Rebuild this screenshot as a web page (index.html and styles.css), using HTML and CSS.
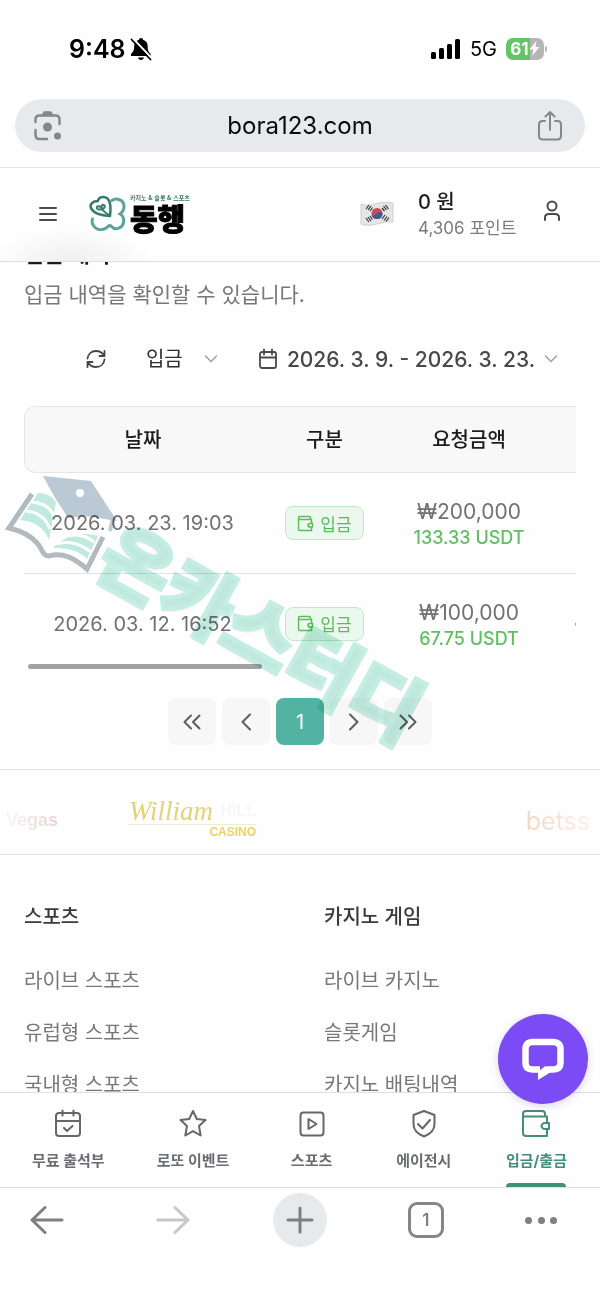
FILE: index.html
```
<!DOCTYPE html>
<html lang="ko">
<head>
  <meta charset="UTF-8" />
  <meta name="viewport" content="width=device-width, initial-scale=1.0" />
  <title>동행 - 입금 내역</title>
  <link rel="stylesheet" href="styles.css">
</head>
<body>
  <div class="status-bar">
    <div class="status-left">
      <span class="clock">9:48</span>
      <svg width="22" height="24" viewBox="0 0 22 24"><path d="M11 1c1.200 0 2 .8 2 1.800 3 .9 4.600 3.200 4.600 6.200 0 4.500 1 6 3 8v2H1v-2c2-2 3.200-3.500 3.200-8 0-3 1.800-5.300 4.800-6.200C9 1.800 9.800 1 11 1zM8 20.500h6c-.3 1.500-1.500 2.500-3 2.500s-2.700-1-3-2.500z" fill="#000"/><path d="M2.500 1l19 20" stroke="#fff" stroke-width="2"/><path d="M1.500 2.500l19 20" stroke="#000" stroke-width="1.800" stroke-linecap="round"/></svg>
    </div>
    <div class="status-right">
      <svg width="30" height="20" viewBox="0 0 30 20"><rect x="0" y="13" width="5" height="7" rx="1.500"/><rect x="8" y="9" width="5" height="11" rx="1.500"/><rect x="16" y="5" width="5" height="15" rx="1.500"/><rect x="24" y="0" width="5" height="20" rx="1.500"/></svg>
      <span class="network">5G</span>
      <span class="battery"><span>61</span><svg width="11" height="15" viewBox="0 0 11 15"><path d="M7.500 0L.5 8.500h4L3 15l7.500-9h-4.200z" fill="#fff"/></svg></span>
    </div>
  </div>

  <div class="address-bar">
    <button class="icon-btn" aria-label="렌즈">
      <svg width="30" height="32" viewBox="0 0 30 32" fill="none" stroke="#85888b" stroke-width="2.500" stroke-linecap="round"><path d="M2.500 12V9.500c0-2.500 1.500-4 4-4h16c2.500 0 4 1.500 4 4V14M2.500 20v5c0 2.500 1.500 4 4 4H14"/><path d="M10 5l1.500-2.500h6L19 5z" fill="#85888b"/><circle cx="14.500" cy="17" r="4.500" fill="#85888b" stroke="none"/><circle cx="24.500" cy="26" r="3.500" fill="#85888b" stroke="none"/></svg>
    </button>
    <span class="url">bora123.com</span>
    <button class="icon-btn" aria-label="공유">
      <svg width="26" height="32" viewBox="0 0 26 32" fill="none" stroke="#85888b" stroke-width="2" stroke-linecap="round" stroke-linejoin="round"><path d="M8 11H5.500C3 11 2 12.500 2 14.500v11C2 28 3 29.500 5.500 29.500h15c2.500 0 3.500-1.500 3.500-4v-11c0-2-1-3.500-3.500-3.500H18M13 20V2.500M8.500 6.500L13 2l4.500 4.500"/></svg>
    </button>
  </div>

  <header>
    <button class="icon-btn" aria-label="메뉴">
      <svg width="20" height="16" viewBox="0 0 20 16" stroke="#4b4b4d" stroke-width="2" stroke-linecap="round"><path d="M2 2h16M2 8h16M2 14h16"/></svg>
    </button>
    <a class="logo" href="#">
      <svg width="38" height="38" viewBox="0 0 38 38" fill="none" stroke-width="3" stroke-linecap="round">
        <path d="M24 5.500c4-3 12-1 12 6 0 4-2 6-4 7.500 4 2 5 8 2 12-3 3.500-8 3.500-10.500.5-1-1-2.500-1-3.500 0-3.500 4-10 4-13 1C4 29.500 3.500 27 4.500 24" stroke="#5ba49c"/>
        <path d="M22 21c1-9 1-19-7-19-4 0-5 3-5 4-6 0-9 4-6.500 8 3 5 10 6.500 18.500 7z" stroke="#357b68" stroke-width="2.500" stroke-linejoin="round"/>
        <path d="M21 20c-5-3-8-6-7.500-9 .5-2.500 4-1 3 1.500-1 2-6 3-7.500 1-1-2 2-3.500 4-1" stroke="#357b68" stroke-width="2"/>
      </svg>
      <span class="logo-text"><small>카지노 &amp; 슬롯 &amp; 스포츠</small><b>동행</b></span>
    </a>
    <svg class="flag" width="34" height="26" viewBox="0 0 34 26">
      <path d="M1 3c6 2 10 1 16-.5S28 1 33 2v19c-6-1-10 .5-16 2S6 25 1 23z" fill="#e5e5e7" stroke="#c6c6c9" stroke-width=".8"/>
      <circle cx="17" cy="12.500" r="5.500" fill="#c94c56"/><path d="M11.600 14c2 1.500 3.500 0 5-1.500s4-2.500 5.800-.5c.5 4-2.400 6-5.400 6s-5-2-5.400-4z" fill="#41598e"/>
      <g stroke="#333" stroke-width="1.200"><path d="M6 8l3-4M8 9l3-4M10 10l2.500-3.500M23.500 5l3 4M25.500 4l3 4M22 7l2.500 3M6 17l3 4M8 16l3 4M10 15l2.500 3.500M22 18l3-4M24 19.500l3-4M26 20.500l3-4"/></g>
    </svg>
    <div class="balance">
      <strong>0 원</strong>
      <span>4,306 포인트</span>
    </div>
    <button class="icon-btn user" aria-label="내 정보">
      <svg width="18" height="22" viewBox="0 0 18 22" fill="none" stroke="#4b4b4d" stroke-width="2" stroke-linecap="round" stroke-linejoin="round"><circle cx="9" cy="6" r="4.500"/><path d="M2 20v-2.500C2 15 3.500 14 6 14h6c2.500 0 4 1 4 3.500V20"/></svg>
    </button>
  </header>

  <main>
    <section class="history">
      <h1>입금 내역</h1>
      <p class="desc">입금 내역을 확인할 수 있습니다.</p>

      <div class="filters">
        <button class="icon-btn" aria-label="새로고침">
          <svg width="20" height="22" viewBox="0 0 20 22" fill="none" stroke="#454547" stroke-width="1.800" stroke-linecap="round" stroke-linejoin="round"><path d="M18.500 3v5H13.500M1.500 19v-5H6.500M1.500 10.500c.5-4.500 4-7.500 8.500-7.500 4 0 6.500 2 8 4.500M18.500 11.500C18 16 14.500 19 10 19c-4 0-6.500-2-8-4.500"/></svg>
        </button>
        <label class="type-select">
          <select aria-label="구분"><option>입금</option><option>출금</option></select>
          <svg width="14" height="8" viewBox="0 0 14 8" fill="none" stroke="#a0a0a3" stroke-width="1.500" stroke-linecap="round"><path d="M1.500 1L7 6.500 12.500 1"/></svg>
        </label>
        <button class="date-btn">
          <svg width="20" height="22" viewBox="0 0 20 22" fill="none" stroke="#4b4b4d" stroke-width="1.800" stroke-linecap="round" stroke-linejoin="round"><rect x="2" y="4" width="16" height="16" rx="2"/><path d="M2 9.500h16M6 1.500v5M14 1.500v5"/></svg>
          <span>2026. 3. 9. - 2026. 3. 23.</span>
          <svg width="14" height="8" viewBox="0 0 14 8" fill="none" stroke="#a0a0a3" stroke-width="1.500" stroke-linecap="round"><path d="M1.500 1L7 6.500 12.500 1"/></svg>
        </button>
      </div>

      <div class="table-wrap">
        <table>
          <thead>
            <tr><th class="col-date">날짜</th><th class="col-type">구분</th><th class="col-amount">요청금액</th><th class="col-state"></th></tr>
          </thead>
          <tbody>
            <tr>
              <td>2026. 03. 23. 19:03</td>
              <td><span class="badge"><svg width="17" height="17" viewBox="0 0 16 17"><use href="#wallet"/></svg>입금</span></td>
              <td class="amount">₩200,000<span>133.33 USDT</span></td>
              <td></td>
            </tr>
            <tr>
              <td>2026. 03. 12. 16:52</td>
              <td><span class="badge"><svg width="17" height="17" viewBox="0 0 16 17"><use href="#wallet"/></svg>입금</span></td>
              <td class="amount">₩100,000<span>67.75 USDT</span></td>
              <td class="state"><i></i></td>
            </tr>
          </tbody>
        </table>
        <div class="scroll-thumb"></div>
      </div>

      <nav class="pagination">
        <button aria-label="처음"><svg width="20" height="16" viewBox="0 0 20 16"><path d="M9 1.500L2.500 8 9 14.500M17.500 1.500L11 8l6.500 6.500"/></svg></button>
        <button aria-label="이전"><svg width="12" height="18" viewBox="0 0 12 18"><path d="M10 1.500L2.500 9l7.500 7.500"/></svg></button>
        <button class="current">1</button>
        <button aria-label="다음"><svg width="12" height="18" viewBox="0 0 12 18"><path d="M2 1.500L9.500 9 2 16.500"/></svg></button>
        <button aria-label="마지막"><svg width="20" height="16" viewBox="0 0 20 16"><path d="M2.500 1.500L9 8l-6.500 6.500M11 1.500L17.500 8 11 14.500"/></svg></button>
      </nav>
    </section>

    <section class="partners">
      <span class="vegas">Vegas</span>
      <div class="william">
        <p><i>William</i> <b>HILL</b></p>
        <span>CASINO</span>
      </div>
      <span class="betsson">betss</span>
    </section>

    <footer>
      <div>
        <h2>스포츠</h2>
        <a href="#">라이브 스포츠</a>
        <a href="#">유럽형 스포츠</a>
        <a href="#">국내형 스포츠</a>
      </div>
      <div>
        <h2>카지노 게임</h2>
        <a href="#">라이브 카지노</a>
        <a href="#">슬롯게임</a>
        <a href="#">카지노 배팅내역</a>
      </div>
    </footer>

    <div class="watermark">
      <svg width="120" height="110" viewBox="0 0 120 110">
        <path d="M32 23L9 57c13 3 22 8 28 15 6 6 5 13 12 13 14-4 25 2 38 13l16-32" fill="none" stroke="#b3bac0" stroke-width="5"/>
        <path d="M38 22c8 0 14 3 18 9l-7 38C45 57 34 50 20 49z" fill="#c2ebdf"/>
        <path d="M53 77c9-9 22-18 45-12L87 88c-9-9-19-11-34-11z" fill="#c2ebdf"/>
        <g fill="none" stroke="#fff" stroke-width="3"><path d="M32 31c10 1 19 5 22 15M26 40c12 1 20 7 24 18M62 67c11-5 22-4 32 4M57 73c11-4 24 0 34 8"/></g>
        <path d="M43 5l48 5 26 40-24-4c-12-2-18 1-25 1L54 25z" fill="#bccad5"/>
        <circle cx="80" cy="22" r="4" fill="#fff"/>
        <path d="M113 48l-3 12" stroke="#bccad5" stroke-width="4"/>
      </svg>
      <span>온카스터디</span>
    </div>
  </main>

  <button class="chat-btn" aria-label="채팅 상담">
    <svg width="44" height="42" viewBox="0 0 44 42" fill="none" stroke="#fff" stroke-width="6.500"><path d="M18 31.500h-6c-5 0-7.500-2-7.500-7V11c0-4.500 2.500-7 7-7h21c4.500 0 7 2.500 7 7v13.500c0 5-2.500 7-7 7h-3.500"/><path d="M17 28.500v13.500l13-8v-5.700h-6l-5 4v-3.800z" fill="#fff" stroke="none"/></svg>
  </button>

  <nav class="tab-bar">
    <a href="#"><svg width="28" height="30" viewBox="0 0 28 30"><rect x="2" y="4" width="24" height="23" rx="3"/><path d="M2 12h24M8.500 1.500v5M19.500 1.500v5M10 19l3 3 5.500-5"/></svg>무료 출석부</a>
    <a href="#"><svg width="28" height="30" viewBox="0 0 28 30"><path d="M14 2l3.800 8 8.700 1-6.500 6 1.700 9.500-7.700-4.300-7.700 4.300L8 17l-6.500-6 8.700-1z"/></svg>로또 이벤트</a>
    <a href="#"><svg width="28" height="30" viewBox="0 0 28 30"><rect x="2.500" y="3.500" width="23" height="23" rx="3"/><path d="M10.500 10v10l8-5z"/></svg>스포츠</a>
    <a href="#"><svg width="28" height="30" viewBox="0 0 28 30"><path d="M14 2l10.500 4v9c0 6-4 10-10.500 12.500C7.500 25 3.500 21 3.500 15V6zM8 15l4.500 4.500L20 11"/></svg>에이전시</a>
    <a href="#" class="active"><svg width="30" height="30" viewBox="0 0 30 30"><path d="M2 7.500h24V14M26 20v7H5c-2 0-3-1-3-3V4.500C2 3 3 2 5 2h16c2 0 3 1 3 2.500v3M28 14h-4c-2 0-3.500 1.500-3.500 3s1.500 3 3.500 3h4z"/></svg>입금/출금</a>
  </nav>

  <div class="browser-bar">
    <button aria-label="뒤로"><svg width="34" height="30" viewBox="0 0 34 30"><path d="M32 15H2M15 2.500L2 15l13 12.500"/></svg></button>
    <button class="off" aria-label="앞으로"><svg width="34" height="30" viewBox="0 0 34 30"><path d="M2 15h30M19 2.500L32 15 19 27.500"/></svg></button>
    <button class="new-tab" aria-label="새 탭"><svg width="28" height="28" viewBox="0 0 28 28"><path d="M14 2v24M2 14h24"/></svg></button>
    <button aria-label="탭 보기"><span class="tab-count">1</span></button>
    <button class="more" aria-label="더보기"><i></i><i></i><i></i></button>
  </div>

  <svg class="defs" width="0" height="0">
    <symbol id="wallet" viewBox="0 0 16 17"><path d="M1 4.500h13v4M14 12v3.500H2.500C1.500 15.500 1 15 1 14V3c0-1 .5-1.500 1.500-1.500h9c1 0 1.500.5 1.500 1.500v1.500M15.200 8.500h-2.700c-1 0-2 .7-2 1.700s1 1.800 2 1.800h2.700z" fill="none" stroke="#5dba5d" stroke-width="1.500" stroke-linejoin="round"/></symbol>
  </svg>
</body>
</html>
```
FILE: styles.css
```
* { box-sizing: border-box; }
body { font-family: Inter, "Noto Sans CJK KR", sans-serif; margin: 0; height: 100vh; display: flex; flex-direction: column; background: #fefefe; color: #1c1c1e; position: relative; overflow: hidden; }
button { font: inherit; color: inherit; background: none; border: none; padding: 0; cursor: pointer; }
a { color: inherit; text-decoration: none; }
svg { display: block; flex: none; }
.icon-btn { display: flex; align-items: center; justify-content: center; }
.defs { position: absolute; }

.status-bar { flex: none; height: 99px; padding: 0 56px 2px 69px; display: flex; align-items: center; justify-content: space-between; color: #000; }
.status-left, .status-right { display: flex; align-items: center; gap: 4px; }
.clock { font-size: 25px; font-weight: 600; }
.status-right { gap: 9px; }
.network { font-size: 20px; }
.battery { position: relative; width: 38px; height: 22px; border-radius: 7px; background: linear-gradient(90deg, #65c466 62%, #b5b5b5 62%); color: #fff; font-size: 17px; font-weight: 700; display: flex; align-items: center; justify-content: center; }
.battery::after { content: ""; position: absolute; right: -3px; top: 8px; width: 2px; height: 6px; border-radius: 0 2px 2px 0; background: #b5b5b5; }

.address-bar { flex: none; height: 53px; margin: 0 15px 15px; padding: 0 22px 0 18px; border-radius: 27px; background: #e8e9ec; display: flex; align-items: center; justify-content: space-between; }
.url { font-size: 24px; color: #0b0b0b; }

header { flex: none; height: 95px; border-top: 1px solid #e5e5e5; border-bottom: 1px solid #dedede; padding: 0 39px 2px 38px; display: flex; align-items: center; background: radial-gradient(ellipse 80px 34px at 72px 100%, #efefef, rgba(254, 254, 254, 0)); }
.logo { display: flex; align-items: center; gap: 4px; margin-left: 30px; }
.logo-text { display: flex; flex-direction: column; color: #000; font-family: "Noto Sans CJK KR", sans-serif; }
.logo-text small { font-size: 6px; line-height: 6px; font-weight: 700; color: #357b68; white-space: nowrap; }
.logo-text b { font-size: 30px; line-height: 32px; font-weight: 900; -webkit-text-stroke: 1px #000; }
.flag { margin-left: auto; margin-right: 24px; }
.balance { display: flex; flex-direction: column; width: 106px; line-height: 26px; padding-top: 3px; }
.balance strong { font-size: 20px; font-weight: 500; }
.balance span { font-size: 17px; color: #7c7c80; white-space: nowrap; }
.user { margin: 0 0 5px 19px; }

main { flex: 1; min-height: 0; overflow: hidden; position: relative; }
.history { padding: 0 24px 24px; }
h1 { font-size: 22px; line-height: 30px; font-weight: 700; margin: -23px 0 11px; }
.desc { font-size: 21px; line-height: 30px; color: #77777a; margin: 0 0 25px; }
.filters { display: flex; align-items: center; justify-content: flex-end; height: 48px; padding-right: 18px; margin-bottom: 23px; }
.type-select { display: flex; align-items: center; margin: 0 40px; gap: 20px; }
.type-select select { appearance: none; border: none; background: none; padding: 0; font: inherit; font-size: 20px; color: #2d2d2f; width: 38px; }
.date-btn { display: flex; align-items: center; gap: 9px; font-size: 21px; font-weight: 500; color: #48484a; white-space: nowrap; }

.table-wrap { position: relative; overflow: hidden; }
table { width: 660px; table-layout: fixed; border-collapse: separate; border-spacing: 0; }
th { height: 67px; padding: 0 0 2px; background: #f8f8f8; border: solid #e5e5e5; border-width: 1px 0; font-size: 20px; font-weight: 500; }
th:first-child { border-left-width: 1px; border-radius: 12px 0 0 12px; }
.col-date { width: 237px; }
.col-type { width: 127px; }
.col-amount { width: 162px; }
td { height: 101px; padding: 0; text-align: center; font-size: 20px; color: #717174; border-bottom: 1px solid #e2e2e2; }
tbody tr:last-child td { border-bottom: none; padding-bottom: 2px; }
.badge { display: inline-flex; align-items: center; gap: 6px; height: 34px; padding: 0 11px; border: 1px solid #bfe9cb; border-radius: 8px; background: #ebf8ee; color: #5dba5d; font-size: 17px; }
td.amount { font-size: 21px; line-height: 26px; padding-top: 4px; }
.amount span { display: block; font-size: 18px; font-weight: 500; color: #5fbf63; }
td.state { padding-left: 25px; }
.state i { display: block; width: 4px; height: 4px; border-radius: 2px; background: #6aa7a0; }
.scroll-thumb { position: absolute; left: 4px; bottom: 6px; width: 234px; height: 5px; border-radius: 3px; background: #a2a2a2; }

.pagination { display: flex; justify-content: center; gap: 6px; margin-top: 23px; }
.pagination button { width: 48px; height: 47px; border-radius: 8px; background: #f7f7f7; display: flex; align-items: center; justify-content: center; font-size: 20px; }
.pagination .current { background: #52b3a2; color: #fff; }
.pagination svg { fill: none; stroke: #5d5d60; stroke-width: 2; stroke-linecap: round; stroke-linejoin: round; }

.partners { height: 86px; border: solid #e2e2e2; border-width: 1px 0; padding: 0 6px; display: flex; align-items: center; font-family: "Liberation Sans", Arial, sans-serif; overflow: hidden; }
.vegas { font-size: 18px; font-weight: 700; margin-top: 16px; background: linear-gradient(90deg, #f8f6f6, #e8d2d5); -webkit-background-clip: text; -webkit-text-fill-color: transparent; }
.william { width: 127px; margin: 12px auto 0 71px; text-align: right; }
.william p { margin: 0; display: flex; align-items: center; justify-content: space-between; line-height: 26px; border-bottom: 1px solid #f0ebcb; }
.william i { font-family: "Liberation Serif", serif; font-size: 27px; color: #e4d277; }
.william b { font-size: 16px; color: #f7f7f7; }
.william span { display: block; font-size: 12px; line-height: 14px; font-weight: 700; color: #ead45f; }
.betsson { font-family: Inter, sans-serif; font-size: 25px; margin-top: 18px; padding-right: 4px; background: linear-gradient(90deg, #f3d6c2, #fbf3ee); -webkit-background-clip: text; -webkit-text-fill-color: transparent; }

footer { display: grid; grid-template-columns: 1fr 1fr; padding: 47px 0 0 24px; gap: 0 24px; }
footer h2 { font-size: 20px; line-height: 30px; font-weight: 500; color: #3a3a3c; margin: 0 0 34px; }
footer a { display: block; font-size: 20px; line-height: 30px; color: #77777a; margin-bottom: 22px; }

/* promo mark laid over the list */
.watermark { position: absolute; left: 0; top: 209px; width: 440px; height: 290px; mix-blend-mode: multiply; pointer-events: none; }
.watermark svg { position: absolute; left: 0; top: 0; }
.watermark span { position: absolute; left: 86px; top: 109px; transform: rotate(29deg); font-family: "Noto Sans CJK KR", sans-serif; font-weight: 900; font-size: 77px; line-height: 100px; white-space: nowrap; color: #c2e9dd; -webkit-text-stroke: 4px #c6efe3; text-shadow: 1px 2px 2px #d2d8d6; }

.chat-btn { position: absolute; right: 12px; bottom: 200px; width: 90px; height: 90px; border-radius: 50%; background: #7b4bf5; box-shadow: 0 2px 8px rgba(80, 50, 160, .2); display: flex; align-items: center; justify-content: center; z-index: 2; }

.tab-bar { flex: none; height: 96px; border: solid #e0e0e0; border-width: 1px 0; padding: 0 33px 0 32px; display: flex; justify-content: space-between; background: #fefefe; }
.tab-bar a { position: relative; min-width: 60px; padding-top: 16px; display: flex; flex-direction: column; align-items: center; gap: 11px; font-size: 15px; line-height: 22px; font-weight: 700; color: #6b6c72; }
.tab-bar svg { fill: none; stroke: #66676b; stroke-width: 2; stroke-linecap: round; stroke-linejoin: round; }
.tab-bar .active { color: #448d7b; }
.tab-bar .active svg { stroke: #448d7b; }
.tab-bar .active::after { content: ""; position: absolute; bottom: 0; width: 60px; height: 4px; border-radius: 4px 4px 0 0; background: #448d7b; }

.browser-bar { flex: none; height: 116px; padding: 5px 43px 0 20px; display: flex; justify-content: space-between; align-items: flex-start; }
.browser-bar button { width: 54px; height: 54px; display: flex; align-items: center; justify-content: center; }
.browser-bar svg { fill: none; stroke: #7d7f81; stroke-width: 3; stroke-linecap: round; stroke-linejoin: round; }
.browser-bar .off svg { stroke: #c6c7c8; }
.browser-bar .new-tab { border-radius: 50%; background: #e8e9ec; }
.tab-count { width: 36px; height: 36px; border: 3px solid #858688; border-radius: 9px; font-size: 17px; line-height: 30px; font-weight: 600; color: #7d7f81; }
.browser-bar .more { width: 32px; justify-content: space-between; }
.more i { width: 7px; height: 7px; border-radius: 50%; background: #7d7f81; }
```
